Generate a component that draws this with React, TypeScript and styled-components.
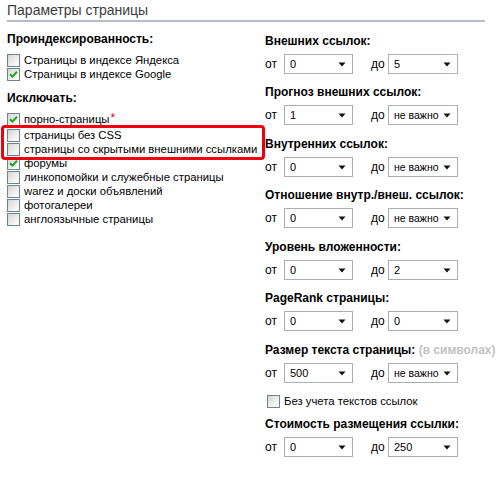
import React from "react"
import styled, { createGlobalStyle } from "styled-components"

const GlobalStyle = createGlobalStyle`
  body {
    margin: 0;
    background: #fff;
    font-family: "Liberation Sans", Arial, sans-serif;
    color: #000;
  }
`

const Page = styled.div`
  width: 500px;
  height: 478px;
  overflow: hidden;
  padding: 0 0 0 7px;
  box-sizing: border-box;
`

const Title = styled.div`
  width: 478px;
  height: 20px;
  line-height: 20px;
  font-size: 14px;
  color: #3c3c3c;
  border-bottom: 2px solid #b4bcc5;
  box-sizing: content-box;
`

const Columns = styled.div`
  display: grid;
  grid-template-columns: 258px 1fr;
`

const LeftCol = styled.div`
  display: flex;
  flex-direction: column;
  padding-top: 9px;
`

const RightCol = styled.div`
  display: flex;
  flex-direction: column;
  padding-top: 11px;
`

const Heading = styled.div<{ $gap?: number }>`
  font-size: 12px;
  font-weight: bold;
  line-height: 16px;
  height: 16px;
  white-space: nowrap;
  margin-bottom: ${p => p.$gap ?? 6}px;
`

const Hint = styled.span`
  color: #c2c2c2;
`

const CheckRow = styled.label<{ $extra?: number; $indent?: number }>`
  display: flex;
  align-items: center;
  height: 14px;
  font-size: 11.3px;
  white-space: nowrap;
  margin-bottom: ${p => p.$extra ?? 0}px;
  margin-left: ${p => p.$indent ?? 0}px;
`

const Box = styled.span`
  width: 11px;
  height: 11px;
  border: 1px solid #6f8194;
  background: linear-gradient(135deg, #d6d6d0 0%, #f4f4f1 70%, #ffffff 100%);
  margin-right: 4px;
  flex-shrink: 0;
  display: flex;
  align-items: center;
  justify-content: center;
`

const Star = styled.sup`
  color: #e2001a;
  font-size: 12px;
  line-height: 0;
  margin-left: 1px;
  position: relative;
  top: -1px;
`

const Spacer = styled.div<{ $h: number }>`
  height: ${p => p.$h}px;
`

const Highlight = styled.div`
  position: relative;
  &::after {
    content: "";
    position: absolute;
    left: -6px;
    right: 0;
    top: -3px;
    bottom: -4px;
    border: 3px solid #f0000f;
    border-radius: 4px;
    pointer-events: none;
  }
`

const Group = styled.div<{ $gap: number }>`
  display: flex;
  flex-direction: column;
  margin-bottom: ${p => p.$gap}px;
`

const RangeRow = styled.div`
  display: flex;
  align-items: center;
  height: 20px;
  font-size: 12px;
`

const From = styled.span`
  width: 19px;
`

const To = styled.span`
  margin-left: 18px;
  width: 17px;
`

const SelectBox = styled.div<{ $w: number }>`
  width: ${p => p.$w}px;
  height: 20px;
  box-sizing: border-box;
  border: 1px solid #a7aeb5;
  background: #fff;
  display: flex;
  align-items: center;
  padding: 0 6px 0 5px;
  font-family: "Liberation Sans", Arial, sans-serif;
`

const SelectText = styled.span<{ $small?: boolean }>`
  flex: 1;
  font-size: ${p => (p.$small ? 10.5 : 11)}px;
  white-space: nowrap;
`

const Arrow = styled.svg`
  width: 8px;
  height: 5px;
  flex-shrink: 0;
`

const Check = ({ on }: { on?: boolean }) => (
  <Box>
    {on && (
      <svg width="9" height="9" viewBox="0 0 9 9">
        <path d="M1 4.2 L3.3 6.6 L8 1.8" fill="none" stroke="#21a121" strokeWidth="2" />
      </svg>
    )}
  </Box>
)

const Select = ({ value, w }: { value: string; w: number }) => (
  <SelectBox $w={w}>
    <SelectText $small={value.length > 4}>{value}</SelectText>
    <Arrow viewBox="0 0 8 5">
      <path d="M0.5 0.5 H7.5 L4 4.5 Z" fill="#111" />
    </Arrow>
  </SelectBox>
)

const Range = ({ from, to }: { from: string; to: string }) => (
  <RangeRow>
    <From>от</From>
    <Select value={from} w={69} />
    <To>до</To>
    <Select value={to} w={70} />
  </RangeRow>
)

const ranges = [
  { label: "Внешних ссылок:", from: "0", to: "5" },
  { label: "Прогноз внешних ссылок:", from: "1", to: "не важно" },
  { label: "Внутренних ссылок:", from: "0", to: "не важно" },
  { label: "Отношение внутр./внеш. ссылок:", from: "0", to: "не важно" },
  { label: "Уровень вложенности:", from: "0", to: "2" },
  { label: "PageRank страницы:", from: "0", to: "0" },
]

export default function App() {
  return (
    <Page>
      <GlobalStyle />
      <Title>Параметры страницы</Title>
      <Columns>
        <LeftCol>
          <Heading>Проиндексированность:</Heading>
          <CheckRow><Check />Страницы в индексе Яндекса</CheckRow>
          <CheckRow><Check on />Страницы в индексе Google</CheckRow>
          <Spacer $h={9} />
          <Heading>Исключать:</Heading>
          <CheckRow $extra={2}><Check on />порно-страницы<Star>*</Star></CheckRow>
          <Highlight>
            <CheckRow><Check />страницы без CSS</CheckRow>
            <CheckRow><Check />страницы со скрытыми внешними ссылками</CheckRow>
          </Highlight>
          <CheckRow><Check on />форумы</CheckRow>
          <CheckRow><Check />линкопомойки и служебные страницы</CheckRow>
          <CheckRow><Check />warez и доски объявлений</CheckRow>
          <CheckRow><Check />фотогалереи</CheckRow>
          <CheckRow><Check />англоязычные страницы</CheckRow>
        </LeftCol>
        <RightCol>
          {ranges.map((r, i) => (
            <Group key={r.label} $gap={i % 2 ? 11 : 10}>
              <Heading $gap={5}>{r.label}</Heading>
              <Range from={r.from} to={r.to} />
            </Group>
          ))}
          <Group $gap={0}>
            <Heading $gap={5}>
              Размер текста страницы: <Hint>(в символах)</Hint>
            </Heading>
            <Range from="500" to="не важно" />
          </Group>
          <Spacer $h={11} />
          <CheckRow $indent={2}><Check />Без учета текстов ссылок</CheckRow>
          <Spacer $h={8} />
          <Heading $gap={5}>Стоимость размещения ссылки:</Heading>
          <Range from="0" to="250" />
        </RightCol>
      </Columns>
    </Page>
  )
}
